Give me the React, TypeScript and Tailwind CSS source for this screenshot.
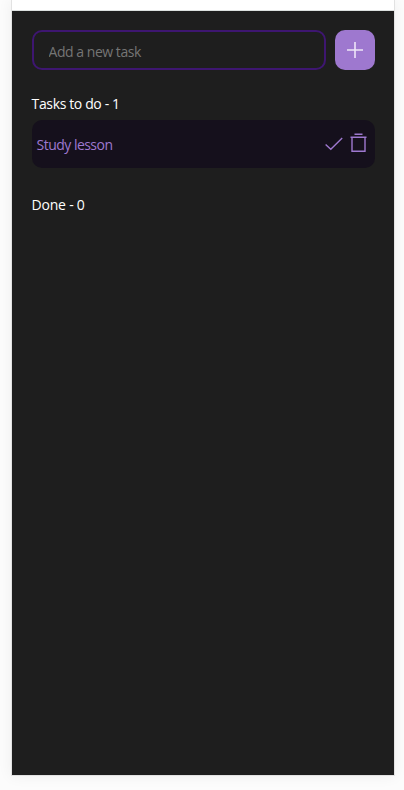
export default function App() {
  return (
    <div className="flex h-[790px] w-[404px] flex-col overflow-hidden bg-[#fcfcfc] pl-[11px] font-['Open_Sans','Noto_Sans',sans-serif] text-[14px] leading-5">
      <div className="flex h-[776px] w-[384px] flex-col border-x border-b border-[#e2e2e2] bg-white shadow-[0_0_14px_rgba(0,0,0,0.06)]">
        <div className="h-[11px] shrink-0 border-b border-[#dce0df] bg-white" />
        <main className="flex-1 bg-[#1e1e1e] pt-[19px] pr-[19.4px] pl-[19.6px]">
          <form className="flex justify-between" onSubmit={(e) => e.preventDefault()}>
            <input
              aria-label="New task"
              placeholder="Add a new task"
              className="h-[39.5px] w-[294px] rounded-[10px] border-2 border-[#3e1671] bg-transparent px-[15px] pt-[3px] tracking-[-0.47px] text-white outline-none placeholder:text-[#757575]"
            />
            <button aria-label="Add" className="flex h-[39.5px] w-[39.5px] items-center justify-center rounded-[10px] bg-[#9e78cf]">
              <svg width="18" height="18" viewBox="0 0 18 18" fill="none" stroke="#eee5f8" strokeWidth="1.6">
                <path d="M9 1v16M1 9h16" />
              </svg>
            </button>
          </form>
          <h2 className="mt-[24.5px] tracking-[-0.37px] text-white">Tasks to do - 1</h2>
          <div className="mt-[5.6px] flex h-[48.8px] items-center justify-between rounded-[10px] bg-[#15101c] pr-2 pl-[5px]">
            <span className="pt-[2.4px] tracking-[-0.53px] text-[#9e78cf]">Study lesson</span>
            <div className="flex items-center gap-[7px] pb-[1.6px]">
              <svg width="18" height="18" viewBox="0 0 18 18" fill="none" stroke="#9e78cf" strokeWidth="1.4">
                <path d="M.6 10.5l5.2 4.7L17.2 4" />
              </svg>
              <svg width="17" height="20" viewBox="0 0 17 20" fill="none" stroke="#9e78cf" strokeWidth="1.4">
                <path d="M4.5 1.3h8M.5 4.3h16M2 4.3v14h13v-14" />
              </svg>
            </div>
          </div>
          <h2 className="mt-[26.6px] tracking-[-0.22px] text-white">Done - 0</h2>
        </main>
      </div>
    </div>
  );
}
